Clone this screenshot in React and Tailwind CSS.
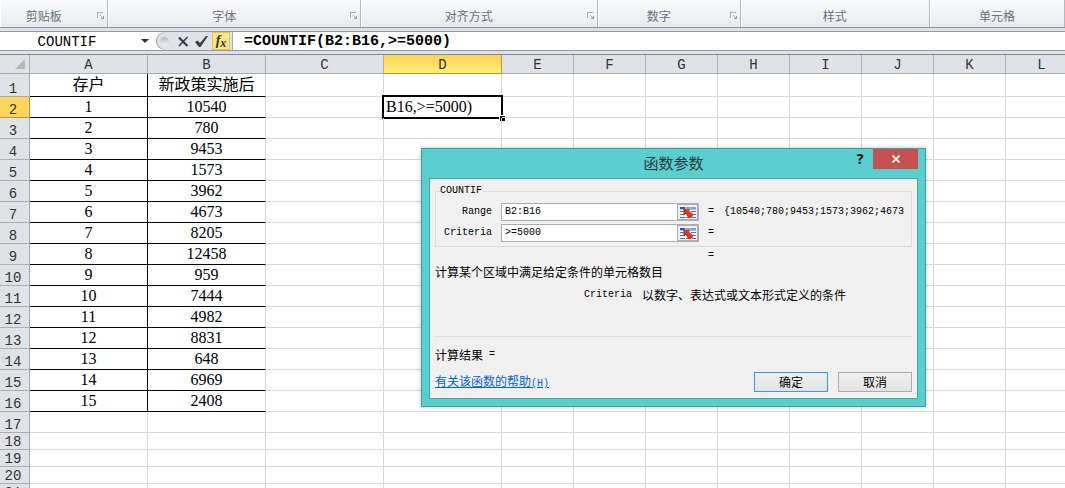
import React, { useState } from "react";

const ribbonGroups = [
  { label: "剪贴板", size: "flex-[108_1_0%]", launcher: true },
  { label: "字体", size: "flex-[253_1_0%]", launcher: true },
  { label: "对齐方式", size: "flex-[237_1_0%]", launcher: true },
  { label: "数字", size: "flex-[143_1_0%]", launcher: true },
  { label: "样式", size: "flex-[189_1_0%]", launcher: false },
  { label: "单元格", size: "flex-[135_1_0%]", launcher: false },
];

const columns = ["A", "B", "C", "D", "E", "F", "G", "H", "I", "J", "K", "L"];

const values = [
  10540, 780, 9453, 1573, 3962, 4673, 8205, 12458, 959, 7444, 4982, 8831, 648,
  6969, 2408,
];

const rows = Array.from({ length: 21 }, (_, i) => {
  if (i === 0) return { A: "存户", B: "新政策实施后" };
  if (i <= values.length) return { A: i, B: values[i - 1] };
  return {};
});

const rowHeight = (n) => {
  if (n === 1) return "h-[23px]";
  return n <= 17 ? "h-[21px]" : "h-[17px]";
};

const LauncherIcon = () => (
  <svg width="8" height="8" viewBox="0 0 8 8" fill="none" shapeRendering="crispEdges">
    <path d="M0.5 6V0.5H6" stroke="#a9aeb6" />
    <path d="M3 3l3 3" stroke="#a9aeb6" />
    <path d="M7 3v4H3z" fill="#9a9fa8" />
  </svg>
);

const RangeIcon = () => (
  <svg width="16" height="11" viewBox="0 0 16 11">
    <rect width="16" height="11" fill="#f4f7fc" />
    <rect width="16" height="3" fill="#a9c3ea" />
    <rect width="5" height="2" fill="#2f55a4" />
    <path d="M6 0h4v2H6zM11 0h5v2h-5z" fill="#7f9fd8" />
    <path d="M0 4h4v1H0zM11 4h5v1h-5zM0 7h4v1H0zM12 7h4v1h-4zM0 10h5v1H0zM6 10h4v1H6zM12 10h4v1h-4z" fill="#4f72b8" />
    <path d="M4 2h6L9 4l4 3v2l-2 2H9L6 6 4 8z" fill="#d93a22" />
    <path d="M4 2v6l2-2 3 5" fill="none" stroke="#a92614" />
  </svg>
);

const Ribbon = () => (
  <div className="flex h-7 shrink-0 border-b border-[#8b9097] bg-gradient-to-b from-[#fafbfc] to-[#e8ebee]">
    {ribbonGroups.map((group) => (
      <div
        key={group.label}
        className={`flex items-center border-r border-[#b4b8be] pt-1 shadow-[inset_1px_0_0_#fff] ${group.size}`}
      >
        <span className="flex-1 text-center text-xs text-[#69707c]">{group.label}</span>
        {group.launcher && (
          <button type="button" aria-label={`${group.label}设置`} className="flex w-5 justify-center pl-2">
            <LauncherIcon />
          </button>
        )}
      </div>
    ))}
  </div>
);

const FormulaBar = () => {
  const [name, setName] = useState("COUNTIF");
  const [formula, setFormula] = useState("=COUNTIF(B2:B16,>=5000)");

  return (
    <div className="mt-[3px] flex h-5 shrink-0 border-y border-[#9299a5] bg-white">
      <input
        aria-label="名称框"
        value={name}
        onChange={(e) => setName(e.target.value)}
        className="w-[134px] pt-[2px] text-center font-['Liberation_Mono',monospace] text-sm leading-4 text-black outline-none"
      />
      <button type="button" aria-label="名称列表" className="flex w-[22px] items-center justify-center">
        <svg width="8" height="4" viewBox="0 0 8 4">
          <path d="M0 0h8L4 4z" fill="#333" />
        </svg>
      </button>
      <div className="flex w-[77px] items-center rounded-l-full border-r border-[#a4a9b1] bg-[#dfe2e7] shadow-[inset_1px_0_0_#9aa0a8]">
        <span className="ml-1 size-[9px] rounded-full bg-gradient-to-b from-[#b5b9c0] to-[#f4f5f7]"></span>
        <button type="button" aria-label="取消" className="ml-[9px]">
          <svg width="11" height="11" viewBox="0 0 11 11" fill="none" stroke="#3b3b3b">
            <path d="M1 1.5L9.500 10" strokeWidth="2.200" />
            <path d="M9.500 1L1 10" strokeWidth="1.500" />
          </svg>
        </button>
        <button type="button" aria-label="输入" className="ml-[6px]">
          <svg width="13" height="11" viewBox="0 0 13 11" fill="#3b3b3b">
            <path d="M0 6l2.500-1.500L5 7l6-7h2L5.500 11H4z" />
          </svg>
        </button>
        <button
          type="button"
          aria-label="插入函数"
          className="ml-1 flex h-[18px] w-[18px] items-center justify-center border border-[#d8c46a] bg-[#ffe77c] font-['Liberation_Serif',serif] text-sm leading-4 font-bold text-[#333] italic"
        >
          f<span className="pt-1 text-xs leading-3">x</span>
        </button>
      </div>
      <input
        aria-label="编辑栏"
        value={formula}
        onChange={(e) => setFormula(e.target.value)}
        className="min-w-0 flex-1 pt-[2px] pl-[11px] font-['Liberation_Mono',monospace] text-[15px] leading-4 font-bold text-black outline-none"
      />
    </div>
  );
};

const Sheet = () => (
  <table className="w-full table-fixed border-separate border-spacing-0 bg-white">
    <colgroup>
      <col className="w-[30px]" />
      {columns.map((c, i) => (
        <col key={c} className={i < 4 ? "w-[118px]" : "w-[72px]"} />
      ))}
    </colgroup>
    <thead>
      <tr className="h-[19px] font-['Liberation_Mono',monospace] text-sm text-[#333]">
        <th className="border-r border-b border-[#a9aeb5] bg-[#dfe2e7] p-0">
          <svg width="10" height="10" viewBox="0 0 10 10" className="ml-auto mr-1">
            <path d="M10 0v10H0z" fill="#b4b9c0" />
          </svg>
        </th>
        {columns.map((c) => (
          <th
            key={c}
            scope="col"
            className={`border-r border-b p-0 pt-[3px] leading-[15px] font-normal ${
              c === "D"
                ? "border-[#c8922e] bg-gradient-to-b from-[#fcd25b] to-[#ffef72]"
                : "border-[#a9aeb5] bg-[#dfe2e7]"
            }`}
          >
            {c}
          </th>
        ))}
      </tr>
    </thead>
    <tbody>
      {rows.map((row, i) => {
        const n = i + 1;
        const filled = row.A !== undefined;
        return (
          <tr key={n} className={rowHeight(n)}>
            <th
              scope="row"
              className={`border-r border-b p-0 pr-[3px] align-bottom font-['Liberation_Mono',monospace] text-sm leading-[14px] font-normal text-[#333] ${
                n === 2 ? "border-[#c8922e] bg-[#ffd65c]" : "border-[#a9aeb5] bg-[#dfe2e7]"
              }`}
            >
              {n}
            </th>
            {columns.map((c) => {
              const data = filled && (c === "A" || c === "B");
              return (
                <td
                  key={c}
                  className={`relative border-r border-b p-0 text-center font-['Liberation_Serif','Noto_Sans_CJK_SC',serif] text-base leading-4 text-black ${
                    data ? "border-b-black" : "border-b-[#d9d9d9]"
                  } ${filled && c === "A" ? "border-r-black" : "border-r-[#d9d9d9]"}`}
                >
                  {row[c]}
                  {n === 2 && c === "D" && (
                    <div className="absolute -inset-[2px] flex items-center border-2 border-black pl-[2px]">
                      B16,&gt;=5000)
                      <span className="absolute -right-[4px] -bottom-[4px] size-[6px] border-t border-l border-white bg-black"></span>
                    </div>
                  )}
                </td>
              );
            })}
          </tr>
        );
      })}
    </tbody>
  </table>
);

const ArgumentRow = ({ label, value, result }) => {
  const [text, setText] = useState(value);
  const id = `arg-${label}`;

  return (
    <div className="flex h-[18px] items-center">
      <label htmlFor={id} className="w-14 text-right font-['Liberation_Mono',monospace] text-[10px]">
        {label}
      </label>
      <div className="ml-[9px] flex h-[18px] w-[198px] border border-[#abadb3] bg-white">
        <input
          id={id}
          value={text}
          onChange={(e) => setText(e.target.value)}
          className="min-w-0 flex-1 pl-[3px] font-['Liberation_Mono',monospace] text-[10px] outline-none"
        />
        <button
          type="button"
          aria-label={`选择 ${label}`}
          className="flex w-[21px] items-center justify-center border border-[#abadb3] bg-[#f0f0f0]"
        >
          <RangeIcon />
        </button>
      </div>
      <span className="ml-[9px] font-['Liberation_Mono',monospace] text-[10px]">=</span>
      <span className="ml-[10px] font-['Liberation_Mono',monospace] text-[10px]">{result}</span>
    </div>
  );
};

const FunctionDialog = () => (
  <div
    role="dialog"
    aria-labelledby="dialog-title"
    className="absolute top-[148px] left-[421px] w-[505px] border border-[#429d9d] bg-[#5bcfcf] px-[7px] pb-[7px] font-['Noto_Sans_CJK_SC',sans-serif] text-xs text-black shadow-[0_0_4px_rgba(0,0,0,0.25)]"
  >
    <div className="flex h-[29px] items-start">
      <span className="w-[63px]"></span>
      <h2 id="dialog-title" className="flex-1 text-center text-[15px] leading-7 text-[#2a3a3a]">
        函数参数
      </h2>
      <button type="button" aria-label="帮助" className="w-[18px] pr-2 font-['Open_Sans',sans-serif] text-sm leading-5 font-bold">
        ?
      </button>
      <button type="button" aria-label="关闭" className="flex h-5 w-[45px] items-center justify-center bg-[#c75050]">
        <svg width="8" height="8" viewBox="0 0 8 8" stroke="#fff" strokeWidth="1.600">
          <path d="M0.500 0.500l7 7M7.500 0.500l-7 7" />
        </svg>
      </button>
    </div>

    <div className="border border-[#46a6a6] bg-[#f0f0f0] px-[5px] pt-[5px] pb-[6px]">
      <fieldset className="border border-[#dcdcdc] pb-1">
        <legend className="ml-1 pr-px font-['Liberation_Mono',monospace] text-[10px] leading-[14px]">COUNTIF</legend>
        <div className="flex flex-col gap-[3px] pt-[5px]">
          <ArgumentRow label="Range" value="B2:B16" result="{10540;780;9453;1573;3962;4673" />
          <ArgumentRow label="Criteria" value=">=5000" />
        </div>
      </fieldset>

      <p className="pl-[273px] font-['Liberation_Mono',monospace] text-[10px] leading-[18px]">=</p>
      <p className="text-xs leading-[14px]">计算某个区域中满足给定条件的单元格数目</p>
      <p className="mt-2 flex items-center gap-[10px] pl-[149px] leading-4">
        <span className="font-['Liberation_Mono',monospace] text-[10px]">Criteria</span>
        <span>以数字、表达式或文本形式定义的条件</span>
      </p>

      <hr className="mt-[33px] border-[#dcdcdc]" />
      <p className="mt-[10px] flex items-center gap-[6px] leading-4">
        计算结果 <span className="font-['Liberation_Mono',monospace] text-[10px]">=</span>
      </p>

      <div className="mt-[9px] flex h-5 items-center gap-[10px]">
        <a href="#help" className="mr-auto text-[#0066cc] underline">
          有关该函数的帮助<span className="font-['Liberation_Mono',monospace] text-[10px]">(H)</span>
        </a>
        <button type="button" className="h-5 w-[74px] border border-[#3399ff] bg-gradient-to-b from-[#f0f0f0] to-[#e3e3e3]">
          确定
        </button>
        <button type="button" className="h-5 w-[74px] border border-[#acacac] bg-gradient-to-b from-[#f0f0f0] to-[#e3e3e3]">
          取消
        </button>
      </div>
    </div>
  </div>
);

export default function App() {
  return (
    <main className="relative flex h-screen flex-col overflow-hidden bg-[#dde1e9] font-['Noto_Sans_CJK_SC',sans-serif]">
      <Ribbon />
      <FormulaBar />
      <div className="mt-[3px] flex-1 overflow-hidden border-t border-[#868a91] bg-white">
        <Sheet />
      </div>
      <FunctionDialog />
    </main>
  );
}
